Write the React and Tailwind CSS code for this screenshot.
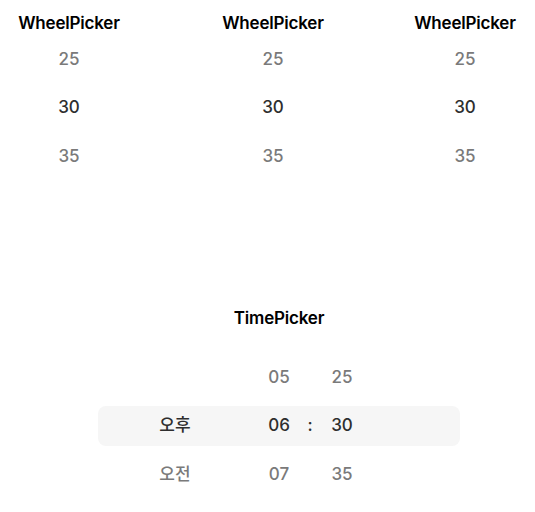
const font = { fontFamily: 'Inter, "Noto Sans CJK KR", sans-serif' };

const values = ["25", "30", "35"];

function WheelColumn({ className = "" }) {
  return (
    <div className={"flex flex-col items-center w-[104px] " + className}>
      <div className="h-6 leading-6 text-[17px] font-semibold text-black tracking-[-0.2px]">
        WheelPicker
      </div>
      {values.map((v, i) => (
        <div
          key={v}
          className={
            "h-[48.5px] flex items-center justify-center text-[17px] font-medium " +
            (i === 1 ? "text-[#2e2e2e]" : "text-[#7a7a7a]")
          }
        >
          {v}
        </div>
      ))}
    </div>
  );
}

function TimePicker() {
  const rows = [
    { ap: "", h: "05", m: "25" },
    { ap: "오후", h: "06", m: "30", active: true },
    { ap: "오전", h: "07", m: "35" },
  ];
  return (
    <div className="ml-[98px] w-[362px] flex flex-col">
      <div className="h-6 leading-6 text-center text-[17px] font-semibold text-black tracking-[-0.2px]">
        TimePicker
      </div>
      <div className="relative mt-[23.5px]">
        <div className="absolute left-0 right-0 top-[52.5px] h-[40px] rounded-lg bg-[#f6f6f6]" />
        {rows.map((r, i) => {
          const color = r.active ? "text-[#2e2e2e]" : "text-[#7a7a7a]";
          return (
            <div key={i} className={"relative h-[48.5px] flex items-center text-[17px] font-medium " + color}>
              <div className="w-[154px] text-center">{r.ap}</div>
              <div className="w-[54px] text-center">{r.h}</div>
              <div className="w-[8px] text-center">{r.active ? ":" : ""}</div>
              <div className="w-[56px] text-center">{r.m}</div>
            </div>
          );
        })}
      </div>
    </div>
  );
}

export default function App() {
  return (
    <div className="w-[535px] h-[512px] bg-white overflow-hidden" style={font}>
      <div className="flex pl-[17px] pt-[11px]">
        <WheelColumn />
        <WheelColumn className="ml-[100px]" />
        <WheelColumn className="ml-[88px]" />
      </div>
      <div className="mt-[125px]">
        <TimePicker />
      </div>
    </div>
  );
}
